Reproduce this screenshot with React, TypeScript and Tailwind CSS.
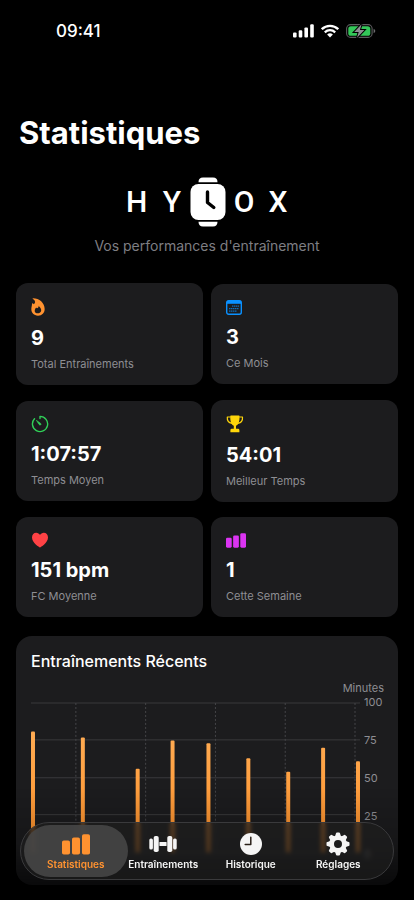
import type { ReactNode } from 'react';

const workouts = [
  { x: 2, minutes: 81 },
  { x: 52, minutes: 77 },
  { x: 107, minutes: 56 },
  { x: 142, minutes: 75 },
  { x: 178, minutes: 73 },
  { x: 218, minutes: 63 },
  { x: 258, minutes: 54 },
  { x: 293, minutes: 70 },
  { x: 328, minutes: 61 },
];

const weekLines = [45, 115, 185, 255, 325];

function FlameIcon() {
  return (
    <svg viewBox="0 0 42 54" className="h-[18px] w-[14px] fill-[#ff9230]">
      <path
        fillRule="evenodd"
        d="M6 1C25 1 41 15 41 33C41 45 33 53 21 53C9 53 1 45 1 34C1 27 3 23 3 18C3 15 6 15 8 19C14 15 14 9 7 4C5 3 4 1 6 1ZM23 23C24 28 20 29 18 31C16 29 14 29 13 32C9 39 12 46 20 46C28 46 32 40 30 34C29 29 26 27 23 23Z"
      />
    </svg>
  );
}

function CalendarIcon() {
  return (
    <svg viewBox="0 0 16 15" className="h-[15px] w-4 fill-none stroke-[#0a91ff]">
      <rect x="0.7" y="0.7" width="14.6" height="13.6" rx="2" strokeWidth="1.4" />
      <path d="M1 2.3h14" strokeWidth="3" />
      <path d="M6 6.2h7M3 8.7h10M3 11.2h7.5" strokeWidth="1.3" strokeDasharray="1.5 0.5" opacity="0.7" />
    </svg>
  );
}

function TimerIcon() {
  return (
    <svg viewBox="0 0 18 18" className="size-[18px] fill-none stroke-[#30d158]" strokeLinecap="round">
      <path d="M9 3.6V1.4A7.6 7.6 0 1 1 3.5 3.8" strokeWidth="1.4" strokeLinejoin="round" />
      <path d="M5.7 5.6L9.6 8.4Q10.4 9.3 9.6 9.9Q8.8 10.4 8.1 9.5Z" className="fill-[#30d158]" strokeWidth="0.7" />
    </svg>
  );
}

function TrophyIcon() {
  return (
    <svg viewBox="0 0 18 18" className="size-[18px] fill-[#ffd60a]">
      <path d="M4.2 1Q4.2 0.4 5 0.4H12.8Q13.6 0.4 13.6 1C13.6 6 12.8 9.5 10 10.8V13.8H12Q13.4 13.8 13.4 15.2V17.3H4.4V15.2Q4.4 13.8 5.8 13.8H7.8V10.8C5 9.5 4.2 6 4.2 1Z" />
      <path
        d="M4.5 2H1.3C1 5.2 2.8 7.8 6 8.4M13.3 2H16.5C16.8 5.2 15 7.8 11.8 8.4"
        className="fill-none stroke-[#ffd60a]"
        strokeWidth="1.2"
        strokeLinejoin="round"
      />
    </svg>
  );
}

function HeartIcon() {
  return (
    <svg viewBox="0 0 18 16" className="h-4 w-[18px] fill-[#ff4245]">
      <path d="M9 15.4C8.4 15.4 1 10.8 1 5.5C1 2.7 2.9 0.8 5.2 0.8C6.9 0.8 8.2 1.7 9 3.1C9.8 1.7 11.1 0.8 12.8 0.8C15.1 0.8 17 2.7 17 5.5C17 10.8 9.6 15.4 9 15.4Z" />
    </svg>
  );
}

function BarsIcon({ className }: { className: string }) {
  return (
    <svg viewBox="0 0 28 21" className={className} fill="currentColor">
      <rect x="0" y="6.5" width="8" height="14" rx="1.8" />
      <rect x="10" y="3.5" width="8" height="17" rx="1.8" />
      <rect x="20" y="0.3" width="8" height="20.2" rx="1.8" />
    </svg>
  );
}

function DumbbellIcon() {
  return (
    <svg viewBox="0 0 28 18" className="h-[18px] w-7" fill="currentColor">
      <rect x="0.3" y="3.5" width="3.6" height="11" rx="1.6" />
      <rect x="4.7" y="1" width="5" height="16" rx="1.8" />
      <rect x="10.4" y="7" width="7.2" height="4" rx="0.6" />
      <rect x="18.3" y="1" width="5" height="16" rx="1.8" />
      <rect x="24.1" y="3.5" width="3.6" height="11" rx="1.6" />
    </svg>
  );
}

function ClockIcon() {
  return (
    <svg viewBox="0 0 22 22" className="size-[22px]" fill="currentColor">
      <circle cx="11" cy="11" r="11" />
      <path d="M10.8 4.2V11.4H5.2" className="fill-none stroke-[#2a2018]" strokeWidth="1.5" strokeLinecap="round" strokeLinejoin="round" />
    </svg>
  );
}

function GearIcon() {
  return (
    <svg viewBox="-12 -12 24 24" className="size-6" fill="currentColor">
      <circle r="6.4" className="fill-none" stroke="currentColor" strokeWidth="4.8" />
      {[0, 45, 90, 135, 180, 225, 270, 315].map((angle) => (
        <path key={angle} d="M-3 -7.5L-2 -10.7Q-1.8 -11.5 -1 -11.5H1Q1.8 -11.5 2 -10.7L3 -7.5Z" transform={`rotate(${angle})`} />
      ))}
    </svg>
  );
}

function StatusBar() {
  return (
    <header className="flex h-[62px] items-center justify-between pr-[38px] pl-14">
      <span className="text-[17px] leading-6 font-medium">09:41</span>
      <div className="flex items-center gap-[7px]">
        <svg viewBox="0 0 21 14" className="h-3.5 w-[21px] fill-white" aria-label="Réseau">
          <rect x="0" y="8.5" width="3.6" height="5" rx="1.1" />
          <rect x="5.7" y="6.3" width="3.6" height="7.2" rx="1.1" />
          <rect x="11.4" y="3.4" width="3.6" height="10.1" rx="1.1" />
          <rect x="17.2" y="0.3" width="3.6" height="13.2" rx="1.1" />
        </svg>
        <svg viewBox="0 0 18 14" className="h-3.5 w-[18px] fill-none stroke-white" aria-label="Wi-Fi">
          <path d="M0.8 5.2C5.4 0.7 12.6 0.7 17.2 5.2" strokeWidth="2.4" />
          <path d="M3.8 8.3C6.8 5.5 11.2 5.5 14.2 8.3" strokeWidth="2.3" />
          <path d="M6.1 10.5Q9 8 11.9 10.5L9 13.5Z" className="fill-white stroke-none" />
        </svg>
        <svg viewBox="0 0 30 14" className="h-3.5 w-[30px]" aria-label="Batterie en charge">
          <rect x="0.6" y="0.6" width="25.5" height="12.8" rx="4" className="fill-none stroke-[#5c5c5e]" strokeWidth="1.1" />
          <rect x="2.3" y="2.2" width="22" height="9.6" rx="2.6" className="fill-[#34c759]" />
          <path d="M27.6 4.8Q29.3 5.5 29.3 7Q29.3 8.5 27.6 9.2Z" className="fill-[#6c6c6e]" />
          <path
            d="M15.6 0.2L8.2 8H12.7L11 13.8L18.4 6H13.9Z"
            className="fill-[#8e8e93] stroke-black"
            strokeWidth="2"
            paintOrder="stroke"
          />
        </svg>
      </div>
    </header>
  );
}

function Logo() {
  return (
    <div className="flex items-center justify-center pl-1.5 font-['Roboto',sans-serif] text-[30px] leading-none font-medium">
      <span className="w-10 pl-1">H</span>
      <span className="w-5 text-center">Y</span>
      <svg viewBox="0 0 36 50" className="mr-1 ml-2 h-[50px] w-9 fill-white" aria-hidden="true">
        <path d="M8.5 5.2C8.5 2 10 0.5 13 0.5H23C26 0.5 27.5 2 27.5 5.2ZM8.5 44.8C8.5 48 10 49.5 13 49.5H23C26 49.5 27.5 48 27.5 44.8Z" />
        <rect x="0.5" y="7" width="35" height="36" rx="8" />
        <path d="M17.5 15V25.5L23.8 30.5" className="fill-none stroke-black" strokeWidth="3.4" strokeLinecap="round" strokeLinejoin="round" />
      </svg>
      <span className="w-7 text-center">O</span>
      <span className="w-10 text-center">X</span>
    </div>
  );
}

type StatCardProps = {
  icon: ReactNode;
  value: string;
  label: string;
  tall?: boolean;
};

function StatCard({ icon, value, label, tall }: StatCardProps) {
  return (
    <div className="flex flex-col rounded-xl bg-[#1c1c1e] px-[15px] pt-3.5 pb-[13px]">
      <div className={tall ? 'flex h-5 items-center' : 'flex h-[18px] items-center'}>{icon}</div>
      <p className="mt-2 text-xl leading-[26px] font-bold">{value}</p>
      <p className="mt-[5px] text-[11px] leading-4 text-[#8e8e93]">{label}</p>
    </div>
  );
}

function WorkoutChart() {
  return (
    <div className="mt-1.5 flex gap-1">
      <svg viewBox="0 0 330 180" className="min-w-0 flex-1" role="img" aria-label="Durée des entraînements récents en minutes">
        <defs>
          <linearGradient id="bar" x1="0" y1="0" x2="0" y2="170" gradientUnits="userSpaceOnUse">
            <stop offset="0.2" stopColor="#ffab52" />
            <stop offset="1" stopColor="#ff8a1f" />
          </linearGradient>
        </defs>
        {[1, 38, 76, 113, 151].map((y) => (
          <path key={y} d={`M0 ${y}H330`} stroke="#3a3a3c" strokeWidth="1" />
        ))}
        {weekLines.map((x) => (
          <path key={x} d={`M${x} 1V151`} stroke="#454548" strokeWidth="1" strokeDasharray="2 2" />
        ))}
        {workouts.map(({ x, minutes }) => (
          <rect key={x} x={x - 2} y={151 - minutes * 1.5} width="4" height={minutes * 1.5} rx="1" fill="url(#bar)" />
        ))}
      </svg>
      <div className="flex w-5 flex-col gap-[22px] text-[11px] leading-4 text-[#8e8e93]">
        <span className="-mt-2">100</span>
        <span>75</span>
        <span>50</span>
        <span>25</span>
        <span>0</span>
      </div>
    </div>
  );
}

type TabProps = {
  icon: ReactNode;
  label: string;
  active?: boolean;
};

function Tab({ icon, label, active }: TabProps) {
  return (
    <button
      type="button"
      aria-current={active ? 'page' : undefined}
      className={active ? 'relative flex-1 text-[#ff9230]' : 'relative flex-1 text-[#f5f5f5]'}
    >
      {active && <span className="absolute -inset-x-2 inset-y-[2px] rounded-full bg-[#464646]/90" />}
      <span className="relative flex flex-col items-center pt-0.5">
        <span className="flex h-6 items-center">{icon}</span>
        <span className="text-[10px] leading-4 font-semibold">{label}</span>
      </span>
    </button>
  );
}

export default function App() {
  return (
    <div className="min-h-screen bg-black pb-4 font-['Inter',sans-serif] text-white">
      <StatusBar />
      <main className="px-4">
        <h1 className="mt-[51px] pl-[3px] text-[31px] leading-10 font-bold">Statistiques</h1>
        <div className="mt-6">
          <Logo />
        </div>
        <p className="mt-[9px] text-center text-sm leading-5 text-[#7e7e83]">Vos performances d'entraînement</p>

        <section className="mt-[27px] grid grid-cols-2 items-center gap-x-2 gap-y-[15px]">
          <StatCard tall icon={<FlameIcon />} value="9" label="Total Entraînements" />
          <StatCard icon={<CalendarIcon />} value="3" label="Ce Mois" />
          <StatCard icon={<TimerIcon />} value="1:07:57" label="Temps Moyen" />
          <StatCard tall icon={<TrophyIcon />} value="54:01" label="Meilleur Temps" />
          <StatCard icon={<HeartIcon />} value="151 bpm" label="FC Moyenne" />
          <StatCard icon={<BarsIcon className="h-[15px] w-5 text-[#db34f2]" />} value="1" label="Cette Semaine" />
        </section>

        <section className="mt-[19px] rounded-2xl bg-[#1c1c1e] pt-[15px] pr-3.5 pb-1 pl-[15px]">
          <h2 className="text-base leading-5 font-medium">Entraînements Récents</h2>
          <p className="mt-[9px] text-right text-[11px] leading-4 text-[#8e8e93]">Minutes</p>
          <WorkoutChart />
        </section>
      </main>

      <div className="pointer-events-none fixed inset-x-0 bottom-0 h-28 bg-linear-to-t from-black/80 via-black/20 to-transparent" />
      <nav className="fixed inset-x-5 bottom-5 flex h-[58px] rounded-full border border-[#3a3a3c] bg-[#1e1e1f]/65 px-[11px] backdrop-blur-[2px]">
        <Tab active icon={<BarsIcon className="h-[21px] w-7" />} label="Statistiques" />
        <Tab icon={<DumbbellIcon />} label="Entraînements" />
        <Tab icon={<ClockIcon />} label="Historique" />
        <Tab icon={<GearIcon />} label="Réglages" />
      </nav>
    </div>
  );
}
